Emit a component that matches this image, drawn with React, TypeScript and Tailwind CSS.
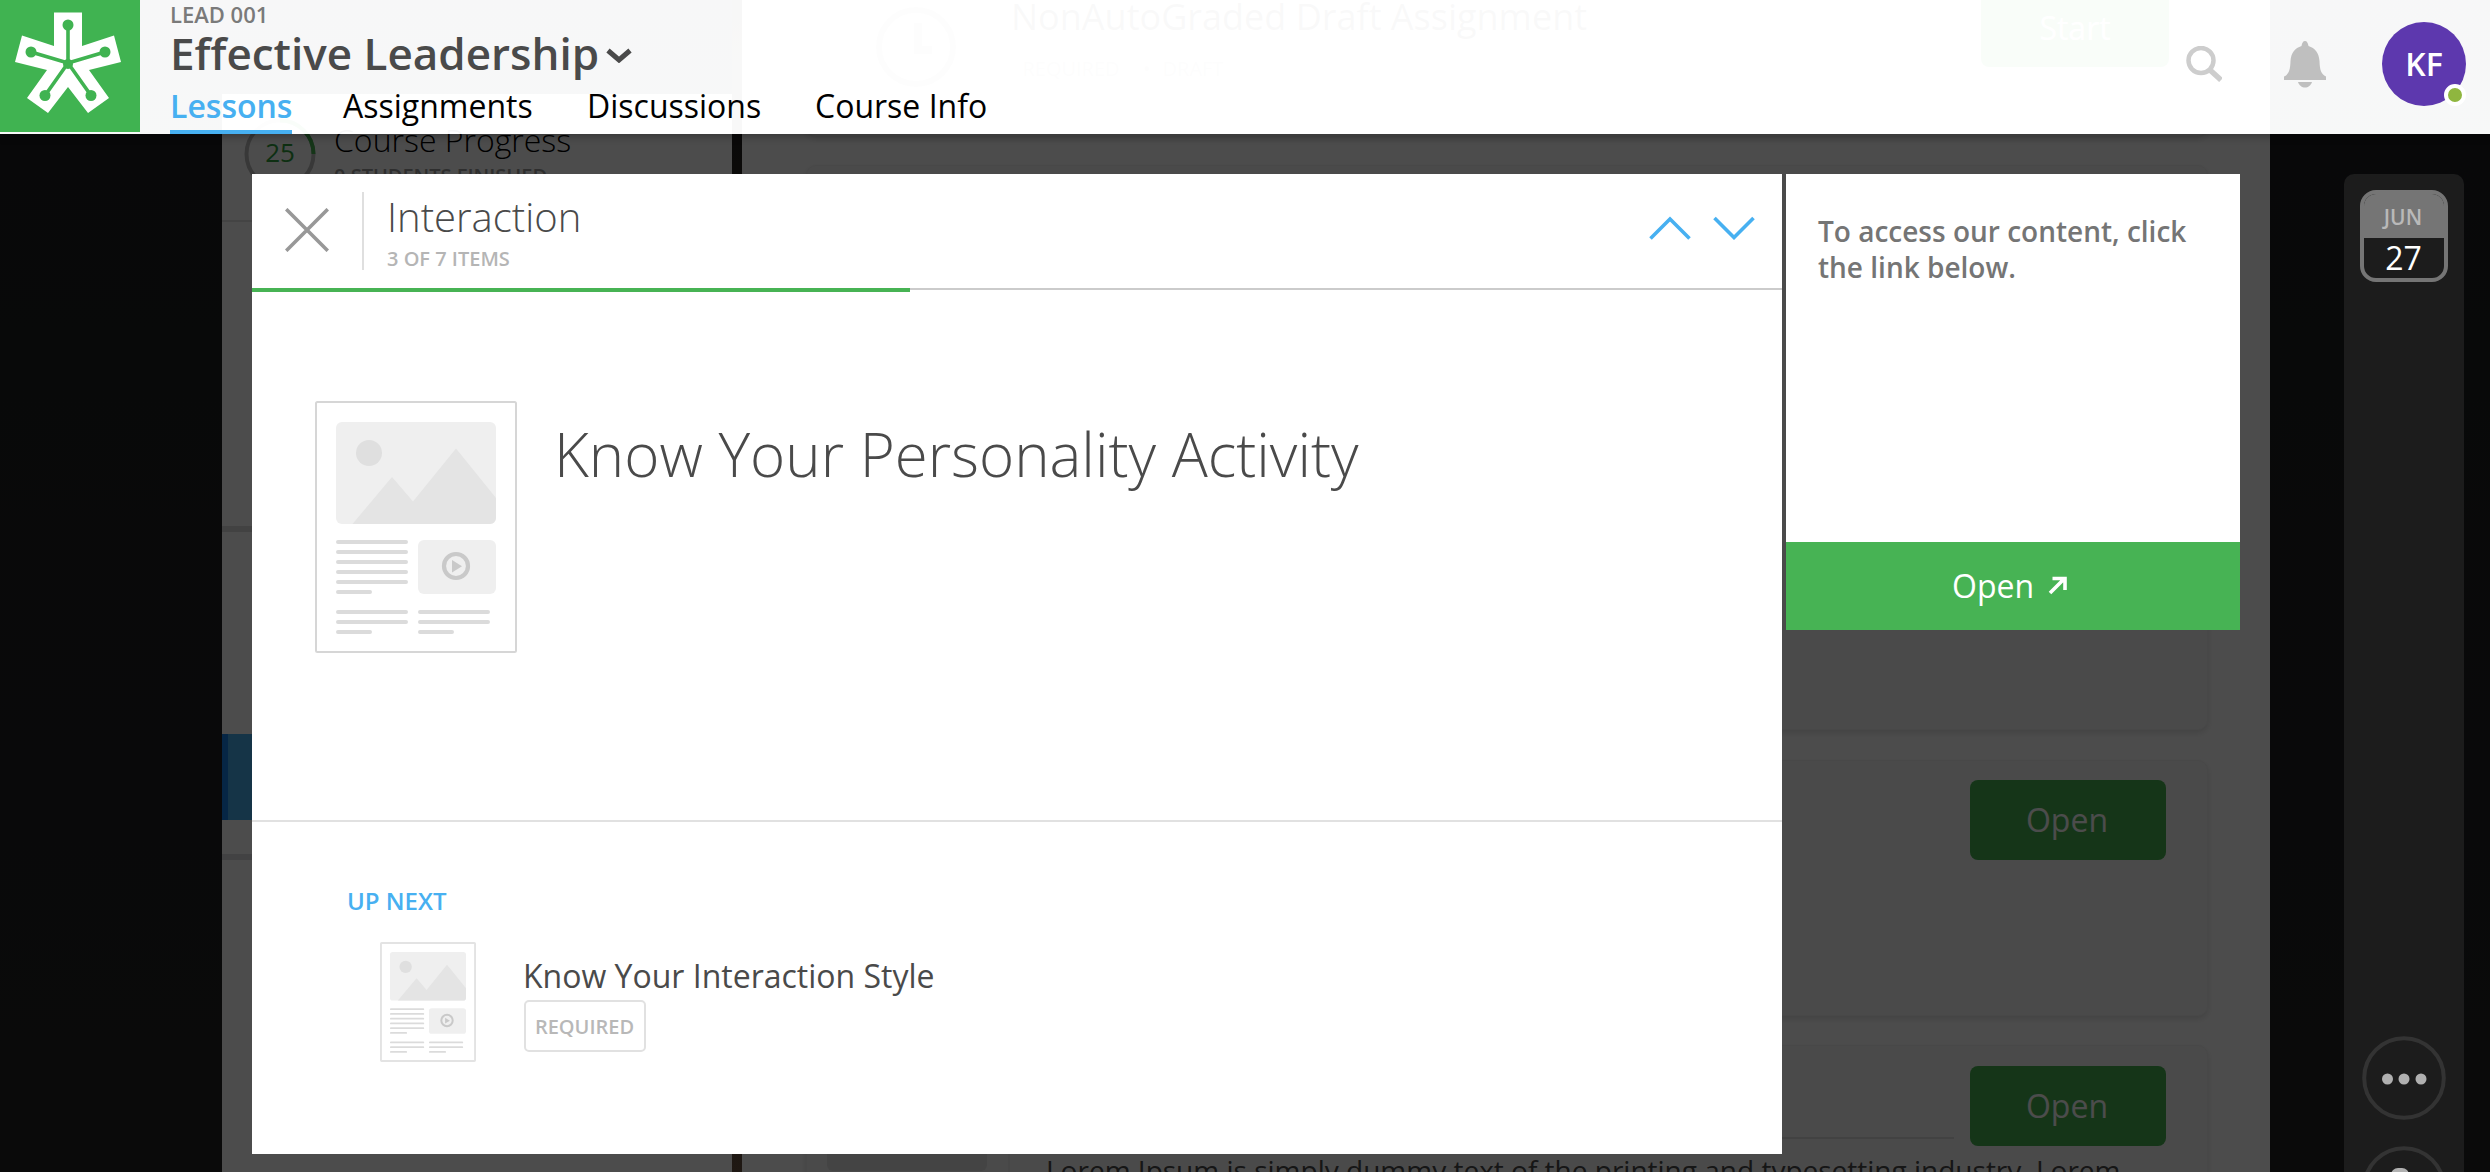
import type { ReactNode } from "react";

function LessonThumb({ className, outline, width }: { className: string; outline: string; width: number }) {
  return (
    <svg viewBox="0 0 202 252" className={className} fill="none">
      <rect x={width / 2} y={width / 2} width={202 - width} height={252 - width} rx="1.5" fill="#fff" stroke={outline} strokeWidth={width} />
      <rect x="21" y="21" width="160" height="102" rx="6" fill="#efefef" />
      <circle cx="54" cy="52" r="13" fill="#dfdfdf" />
      <path d="M37.500 123 77 76l21 24.500L141 47.500l40 49.500v20a6 6 0 0 1-6 6Z" fill="#e4e4e4" />
      <rect x="103" y="139" width="78" height="54" rx="6" fill="#efefef" />
      <circle cx="141" cy="165" r="12" stroke="#c9c9c9" strokeWidth="4.200" />
      <path d="M137 159v12.500l10-6.250Z" fill="#c9c9c9" />
      <path
        d="M23 141h68M23 151h68M23 161h68M23 171h68M23 181h68M23 191h32M23 211h68M23 221h68M23 231h32M105 211h68M105 221h68M105 231h32"
        stroke="#dbdbdb"
        strokeWidth="4"
        strokeLinecap="round"
      />
    </svg>
  );
}

function Card({ className, children }: { className: string; children?: ReactNode }) {
  return (
    <section
      className={`w-[1402px] shrink-0 rounded-[10px] border border-[#f1f1f1] bg-[#f9f9f9] shadow-[0_3px_6px_rgba(0,0,0,0.12)] ${className}`}
    >
      {children}
    </section>
  );
}

function CardButton() {
  return (
    <span className="flex h-20 w-49 items-center justify-center rounded-lg bg-[#46b352] pr-0.5 text-[32px] text-white">Open</span>
  );
}

function CoursePage() {
  return (
    <div className="flex h-full pl-[222px]">
      <aside className="mt-[94px] w-[510px] shrink-0 bg-white">
        <div className="flex h-32 border-b-2 border-[#e3e3e3] pl-[22px]">
          <div className="relative mt-6 h-18 w-18">
            <svg viewBox="0 0 72 72" className="h-18 w-18" fill="none">
              <circle cx="36" cy="36" r="33.500" stroke="#bdbdbd" strokeWidth="4" />
              <path d="M36 2.500a33.500 33.500 0 0 1 33.500 33.500" stroke="#46b352" strokeWidth="4" />
            </svg>
            <span className="absolute inset-0 text-center text-[26px] leading-[68px] text-[#2f9e3c]">25</span>
          </div>
          <div className="pt-6 pl-[18px]">
            <div className="text-[32px] leading-[43px] font-light text-black">Course Progress</div>
            <div className="text-[20px] leading-[30px] font-semibold text-[#9a9a9a]">0 STUDENTS FINISHED</div>
          </div>
        </div>
        <div className="h-[310px] border-b-[6px] border-[#dedede]" />
        <div className="h-[202px]" />
        <div className="h-[86px] border-l-[6px] border-[#177fe6] bg-[#49aded]" />
        <div className="h-10 border-b-[6px] border-[#dedee2]" />
      </aside>
      <div className="w-2.5 shrink-0 bg-linear-to-b from-[#1b1b1b] to-[#685040]" />
      <main className="flex w-[1528px] shrink-0 flex-col overflow-hidden bg-white pl-16">
        <Card className="h-[136px] rounded-t-none pl-[69px]">
          <div className="flex">
            <svg viewBox="0 0 80 92" className="h-[92px] w-20 shrink-0" fill="none" stroke="#bdbdbd" strokeWidth="6">
              <circle cx="40" cy="46" r="37" />
              <path d="M42 22v27h14" strokeWidth="8" />
            </svg>
            <div className="w-[1025px] shrink-0 pl-[55px]">
              <div className="-mt-1 text-[36px] leading-10 text-[#4a4a4a]">NonAutoGraded Draft Assignment</div>
              <div className="mt-2 flex items-center gap-3 text-[20px] text-[#b5b5b5]">
                <span className="flex h-12 w-30 items-center justify-center rounded border-2 border-[#e6e6e6]">REQUIRED</span>
                <span>•</span>
                <span>DRAFT</span>
              </div>
            </div>
            <span className="-mt-3 flex h-[78px] w-[188px] shrink-0 items-center justify-center rounded-lg bg-[#46b352] text-[32px] leading-none text-white">
              Start
            </span>
          </div>
        </Card>
        <Card className="mt-[29px] h-[565px]" />
        <Card className="mt-[30px] flex h-64 justify-end pt-[19px] pr-[41px]">
          <CardButton />
        </Card>
        <Card className="mt-[29px] flex h-80 pl-[20px]">
          <div className="h-[125px] w-40 rounded-md bg-[#e3e3e3]" />
          <div className="ml-[21px] flex grow border-l-2 border-[#ededed]">
            <div className="w-[944px] pl-[36px]">
              <div className="h-[93px] border-b-2 border-[#dcdcdc]" />
              <div className="mt-[12px] text-[28px] leading-[38px] whitespace-nowrap text-[#4a4a4a]">
                Lorem Ipsum is simply dummy text of the printing and typesetting industry. Lorem
              </div>
            </div>
            <div className="ml-[16px] pt-[20px]">
              <CardButton />
            </div>
          </div>
        </Card>
      </main>
    </div>
  );
}

function BrandMark() {
  return (
    <svg viewBox="0 0 140 132" className="h-[132px] w-35 bg-[#40b351]">
      <path d="M54 12.500h28V46l32-10.500 7 26.500-32 8 20 28-21 15-20-26-20 26-21-15 20-28-32-8 7-26.500L54 46Z" fill="#fff" />
      <path d="M68 63V25M68 63 31 52M68 63l37-11M68 63 45 95.500M68 63l23 32.500" stroke="#40b351" strokeWidth="3.600" />
      <g fill="#40b351">
        <circle cx="68" cy="25" r="5.500" />
        <circle cx="31" cy="52" r="5.500" />
        <circle cx="105" cy="52" r="5.500" />
        <circle cx="45" cy="95.500" r="5.500" />
        <circle cx="91" cy="95.500" r="5.500" />
        <circle cx="68" cy="64" r="5" />
      </g>
    </svg>
  );
}

function Header() {
  return (
    <header className="absolute inset-x-0 top-0 flex h-[134px] bg-white/97 shadow-[0_2px_8px_rgba(0,0,0,0.3)]">
      <BrandMark />
      <div className="pl-[30px]">
        <div className="text-[22px] leading-7 font-semibold text-[#7a7a7a]">LEAD 001</div>
        <div className="flex items-center gap-2 text-[44px] leading-[50px] font-semibold text-[#4a4a4a]">
          <span className="w-[428px] whitespace-nowrap">Effective Leadership</span>
          <svg viewBox="0 0 26 16" className="mt-1 h-4 w-[26px]" fill="none" stroke="#4a4a4a" strokeWidth="5">
            <path d="M2 3.500 13 13 24 3.500" />
          </svg>
        </div>
        <nav className="flex text-[32px] leading-[56px] whitespace-nowrap text-black">
          <span className="h-14 w-[122px] border-b-4 border-[#47b0f1] font-semibold text-[#47b0f1]">Lessons</span>
          <span className="ml-[51px] w-[190px]">Assignments</span>
          <span className="ml-[54px] w-[176px]">Discussions</span>
          <span className="ml-[52px]">Course Info</span>
        </nav>
      </div>
      <div className="ml-auto flex items-start pr-6">
        <svg viewBox="0 0 36 36" className="mt-[46px] h-9 w-9" fill="none" stroke="#cdcdcd">
          <circle cx="15" cy="14.500" r="12.500" strokeWidth="4.500" />
          <path d="M24 24 35 34" strokeWidth="5.500" />
        </svg>
        <svg viewBox="0 0 42 47" className="mt-[41px] ml-[62px] h-[47px] w-[42px]" fill="#bfbfbf">
          <path d="M21 0c2 0 3 2 3.500 5C31 7 35 12 35.500 20c.3 9 1.500 13 6.500 15.500V39H0v-3.500C5 33 6.200 29 6.500 20 7 12 11 7 17.500 5 18 2 19 0 21 0Z" />
          <path d="M14 41h14c-1 3.500-4 5.500-7 5.500S15 44.500 14 41Z" />
        </svg>
        <div className="relative mt-[22px] ml-14 h-21 w-21 rounded-full bg-[#5d38ae] text-center text-[32px] leading-[84px] font-semibold text-white">
          KF
          <span className="absolute right-0 bottom-0 h-[22px] w-[22px] rounded-full border-4 border-white bg-[#8fb63f]" />
        </div>
      </div>
    </header>
  );
}

function LessonPanel() {
  return (
    <div className="h-[980px] w-[1530px] bg-white">
      <div className="flex h-[114px] pl-[33px]">
        <svg viewBox="0 0 44 44" className="mt-[34px] h-11 w-11" stroke="#989898" strokeWidth="3.600">
          <path d="M1.200 1.200l41.600 41.600M42.800 1.200 1.200 42.800" />
        </svg>
        <div className="mt-[18px] ml-[33px] h-[78px] w-0.5 bg-[#dfdfdf]" />
        <div className="ml-[23px] whitespace-nowrap">
          <h2 className="mt-[16px] text-[40px] leading-[54px] font-light text-[#4a4a4a]">Interaction</h2>
          <div className="text-[20px] leading-[30px] font-semibold text-[#b5b5b5]">3 OF 7 ITEMS</div>
        </div>
        <div className="mt-[42px] mr-[27px] ml-auto flex gap-[22px]">
          <svg viewBox="0 0 42 24" className="h-6 w-[42px]" fill="none" stroke="#47b0f1" strokeWidth="3.600">
            <path d="M1.500 22.500 21 3l19.500 19.500" />
          </svg>
          <svg viewBox="0 0 42 24" className="h-6 w-[42px]" fill="none" stroke="#47b0f1" strokeWidth="3.600">
            <path d="M1.500 2 21 21.500 40.500 2" />
          </svg>
        </div>
      </div>
      <div className="h-1">
        <div className="flex h-0.5 bg-[#cbcbcb]">
          <div className="h-1 w-[658px] bg-[#47b354]" />
        </div>
      </div>
      <div className="flex h-[528px] pt-[109px] pl-[63px]">
        <LessonThumb className="h-[252px] w-[202px]" outline="#d6d6d6" width={2} />
        <h1 className="ml-[37px] text-[60px] leading-[106px] font-light whitespace-nowrap text-[#4a4a4a]">
          Know Your Personality Activity
        </h1>
      </div>
      <div className="h-0.5 bg-[#e1e1e1]" />
      <div className="pt-[60px] pl-[95px]">
        <div className="text-[24px] leading-[38px] font-semibold text-[#47b0f1]">UP NEXT</div>
        <div className="mt-[22px] ml-[33px] flex">
          <LessonThumb className="h-30 w-24" outline="#e3e3e3" width={4} />
          <div className="pt-[12px] pl-12">
            <div className="-ml-px text-[32px] leading-[44px] whitespace-nowrap text-[#4a4a4a]">Know Your Interaction Style</div>
            <div className="mt-0.5 flex h-13 w-[122px] items-center justify-center rounded-[5px] border-2 border-[#e1e1e1] pt-0.5 pr-px text-[20px] font-semibold text-[#b8b8b8]">
              REQUIRED
            </div>
          </div>
        </div>
      </div>
    </div>
  );
}

function AccessPanel() {
  return (
    <div className="h-[456px] w-[454px] bg-white">
      <p className="h-[368px] px-8 pt-[39px] text-[28px] leading-9 font-semibold text-[#757575]">
        To access our content, click the link below.
      </p>
      <div className="flex h-22 items-center bg-[#47b354] pl-[166px] text-[32px] text-white">
        Open
        <svg viewBox="0 0 20 20" className="mb-0.5 ml-[14px] h-5 w-5" fill="none" stroke="#fff" strokeWidth="3.600">
          <path d="M2 18 16 4M4.500 3.500H17V15" />
        </svg>
      </div>
    </div>
  );
}

function Rail() {
  return (
    <div className="flex h-[998px] w-30 flex-col items-center rounded-t-[10px] bg-[#1c1c1c]">
      <div className="mt-4 h-[92px] w-22 shrink-0 overflow-hidden rounded-2xl border-4 border-[#757575] text-center font-semibold">
        <div className="h-11 bg-[#757575] pr-0.5 text-[21px] leading-[46px] text-[#b9b9b9]">JUN</div>
        <div className="pr-px text-[32px] leading-[40px] font-medium text-white">27</div>
      </div>
      <svg viewBox="0 0 84 84" className="mt-[754px] h-21 w-21 shrink-0">
        <circle cx="42" cy="42" r="39.800" fill="none" stroke="#333" strokeWidth="4" />
        <g fill="#b0b0b0">
          <circle cx="25.500" cy="43" r="5.500" />
          <circle cx="42" cy="43" r="5.500" />
          <circle cx="59" cy="43" r="5.500" />
        </g>
      </svg>
      <svg viewBox="0 0 84 84" className="mt-[26px] h-21 w-21 shrink-0">
        <circle cx="42" cy="42" r="39.800" fill="none" stroke="#333" strokeWidth="4" />
        <rect x="29" y="22" width="18" height="20" rx="7" fill="#b0b0b0" />
        <circle cx="56" cy="34" r="8" fill="#666" />
      </svg>
    </div>
  );
}

export default function App() {
  return (
    <div className="relative h-[1172px] w-[2490px] overflow-hidden bg-linear-to-b from-[#1a1c20] to-[#232323] font-['Open_Sans',sans-serif]">
      <CoursePage />
      <div className="absolute inset-x-0 top-[134px] bottom-0 overflow-hidden bg-black/70">
        <div className="flex items-start pt-10 pl-[252px]">
          <LessonPanel />
          <div className="ml-1">
            <AccessPanel />
          </div>
          <div className="ml-[104px]">
            <Rail />
          </div>
        </div>
      </div>
      <Header />
    </div>
  );
}
